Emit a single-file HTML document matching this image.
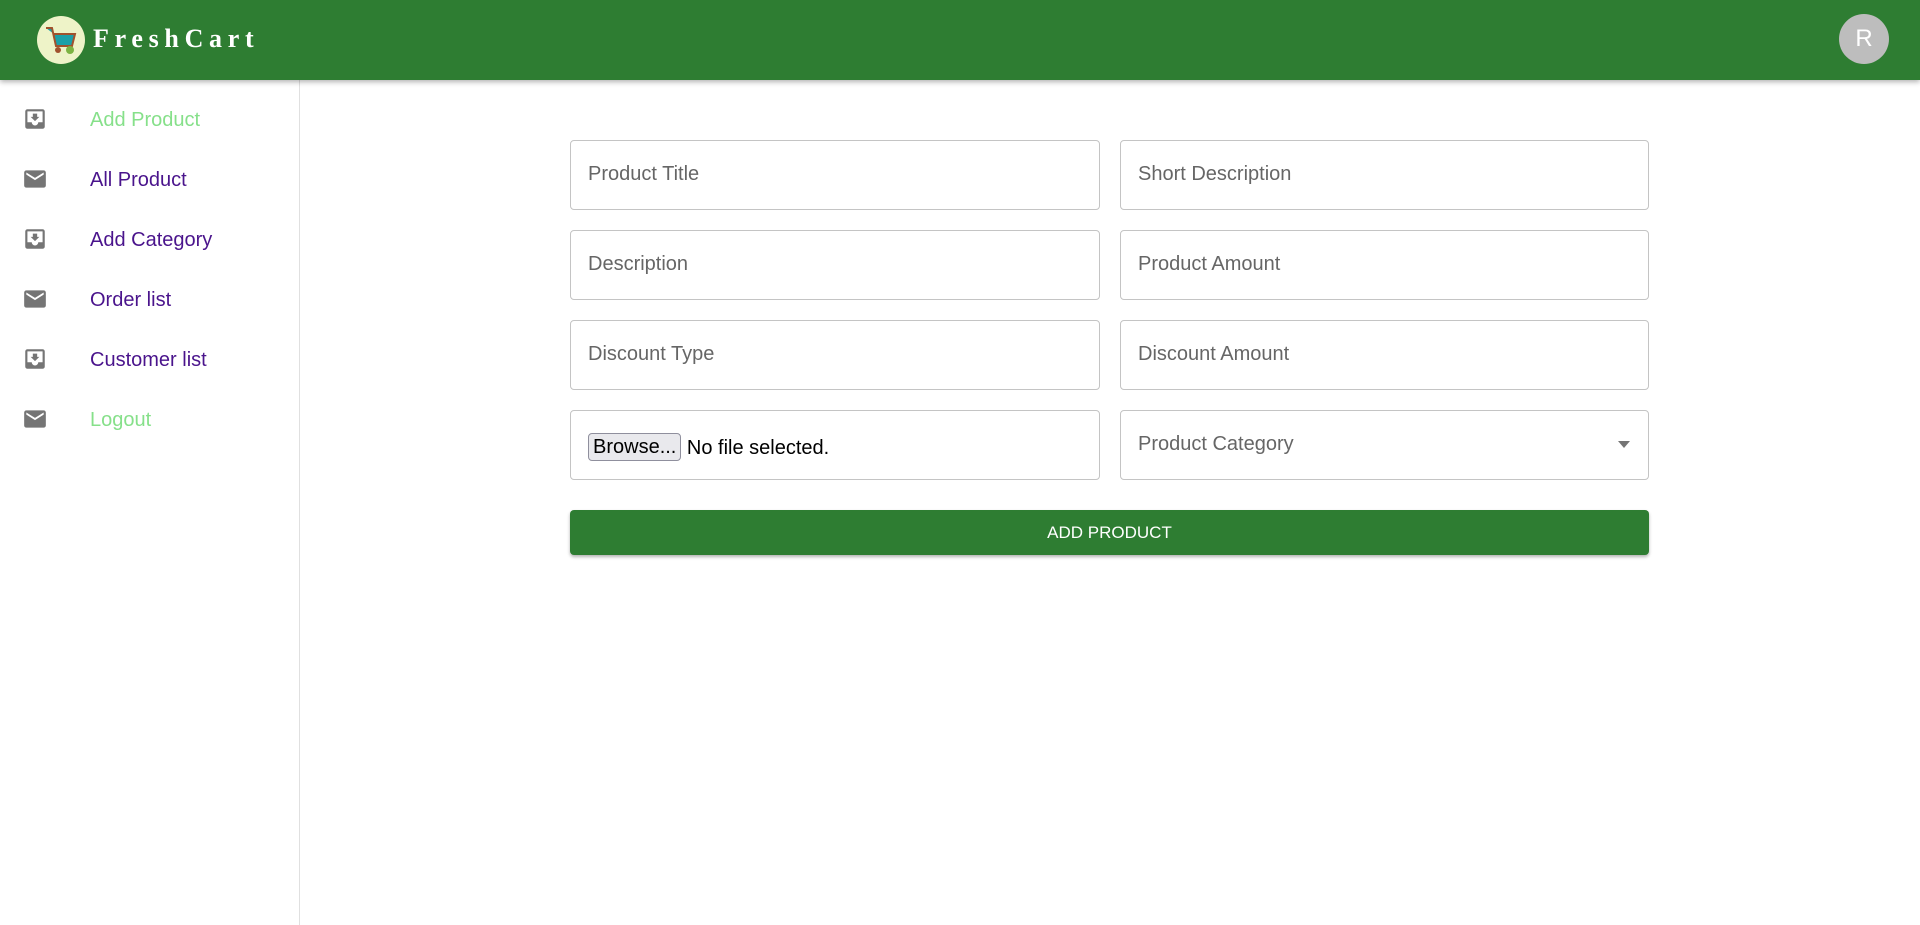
<!DOCTYPE html>
<html><head><meta charset="utf-8"><style>
*{box-sizing:border-box;margin:0;padding:0}
body{width:1920px;height:925px;background:#fff;font-family:"Liberation Sans",Arial,sans-serif;position:relative;overflow:hidden}
.hdr{position:absolute;left:0;top:0;width:1920px;height:80px;background:#2e7d32;box-shadow:0 2px 5px rgba(0,0,0,.3);z-index:2}
.logo{position:absolute;left:37px;top:16px;width:48px;height:48px;border-radius:50%;background:#eef3c8}
.brand{position:absolute;left:93px;top:24px;color:#fff;font-family:"Liberation Serif",serif;font-weight:bold;font-size:26px;letter-spacing:5.7px}
.av{position:absolute;left:1839px;top:14px;width:50px;height:50px;border-radius:50%;background:#bdbdbd;color:#fff;font-size:24px;text-align:center;line-height:50px}
.side{position:absolute;left:0;top:80px;width:300px;height:845px;border-right:1px solid #e0e0e0}
.item{position:absolute;left:0;height:40px;width:299px}
.item svg{position:absolute;left:20px;top:6px}
.item span{position:absolute;left:90px;top:9px;font-size:20px}
.g{color:#86e08a}.p{color:#4a148c}
.f{position:absolute;height:70px;border:1px solid #c4c4c4;border-radius:4px;font-size:20px;color:#666;padding-left:17px;line-height:67px}
.btn{position:absolute;left:570px;top:510px;width:1079px;height:45px;background:#2e7d32;border-radius:4px;color:#fff;font-size:17px;text-align:center;line-height:45px;box-shadow:0 2px 3px rgba(0,0,0,.3)}
.br{display:inline-block;border:1px solid #8f8f9d;background:#e9e9ed;border-radius:4px;color:#000;font-size:20px;line-height:26px;padding:0 4px;vertical-align:middle;margin-top:-4px}
</style></head><body>
<div class="hdr">
<div class="logo"><svg width="48" height="48" viewBox="0 0 48 48"><path d="M9 12h6l4 18h16l3-12H17" fill="#1ba0a8" stroke="#a0522d" stroke-width="2"/><circle cx="21" cy="34" r="3" fill="#a0522d"/><circle cx="33" cy="34" r="4" fill="#7cb342"/></svg></div>
<div class="brand">FreshCart</div>
<div class="av">R</div>
</div>
<div class="side">
<div class="item" style="top:20px"><svg width="30" height="26" viewBox="0 0 24 24"><path fill="#757575" d="M19 3H5a2 2 0 0 0-2 2v14a2 2 0 0 0 2 2h14a2 2 0 0 0 2-2V5a2 2 0 0 0-2-2zm0 12h-4a3 3 0 0 1-6 0H5V5h14v10zM16 10h-2V7h-4v3H8l4 4 4-4z"/></svg><span class="g">Add Product</span></div>
<div class="item" style="top:80px"><svg width="30" height="26" viewBox="0 0 24 24"><path fill="#757575" d="M20 4H4a2 2 0 0 0-2 2v12a2 2 0 0 0 2 2h16a2 2 0 0 0 2-2V6a2 2 0 0 0-2-2zm0 4l-8 5-8-5V6l8 5 8-5v2z"/></svg><span class="p">All Product</span></div>
<div class="item" style="top:140px"><svg width="30" height="26" viewBox="0 0 24 24"><path fill="#757575" d="M19 3H5a2 2 0 0 0-2 2v14a2 2 0 0 0 2 2h14a2 2 0 0 0 2-2V5a2 2 0 0 0-2-2zm0 12h-4a3 3 0 0 1-6 0H5V5h14v10zM16 10h-2V7h-4v3H8l4 4 4-4z"/></svg><span class="p">Add Category</span></div>
<div class="item" style="top:200px"><svg width="30" height="26" viewBox="0 0 24 24"><path fill="#757575" d="M20 4H4a2 2 0 0 0-2 2v12a2 2 0 0 0 2 2h16a2 2 0 0 0 2-2V6a2 2 0 0 0-2-2zm0 4l-8 5-8-5V6l8 5 8-5v2z"/></svg><span class="p">Order list</span></div>
<div class="item" style="top:260px"><svg width="30" height="26" viewBox="0 0 24 24"><path fill="#757575" d="M19 3H5a2 2 0 0 0-2 2v14a2 2 0 0 0 2 2h14a2 2 0 0 0 2-2V5a2 2 0 0 0-2-2zm0 12h-4a3 3 0 0 1-6 0H5V5h14v10zM16 10h-2V7h-4v3H8l4 4 4-4z"/></svg><span class="p">Customer list</span></div>
<div class="item" style="top:320px"><svg width="30" height="26" viewBox="0 0 24 24"><path fill="#757575" d="M20 4H4a2 2 0 0 0-2 2v12a2 2 0 0 0 2 2h16a2 2 0 0 0 2-2V6a2 2 0 0 0-2-2zm0 4l-8 5-8-5V6l8 5 8-5v2z"/></svg><span class="g">Logout</span></div>
</div>
<div class="f" style="left:570px;top:140px;width:530px">Product Title</div>
<div class="f" style="left:1120px;top:140px;width:529px">Short Description</div>
<div class="f" style="left:570px;top:230px;width:530px">Description</div>
<div class="f" style="left:1120px;top:230px;width:529px">Product Amount</div>
<div class="f" style="left:570px;top:320px;width:530px">Discount Type</div>
<div class="f" style="left:1120px;top:320px;width:529px">Discount Amount</div>
<div class="f" style="left:570px;top:410px;width:530px;color:#000;padding-top:4px"><span class="br">Browse...</span> No file selected.</div>
<div class="f" style="left:1120px;top:410px;width:529px">Product Category<svg style="position:absolute;right:18px;top:30px" width="12" height="8"><path d="M0 0h12L6 7z" fill="#757575"/></svg></div>
<div class="btn">ADD PRODUCT</div>
</body></html>
